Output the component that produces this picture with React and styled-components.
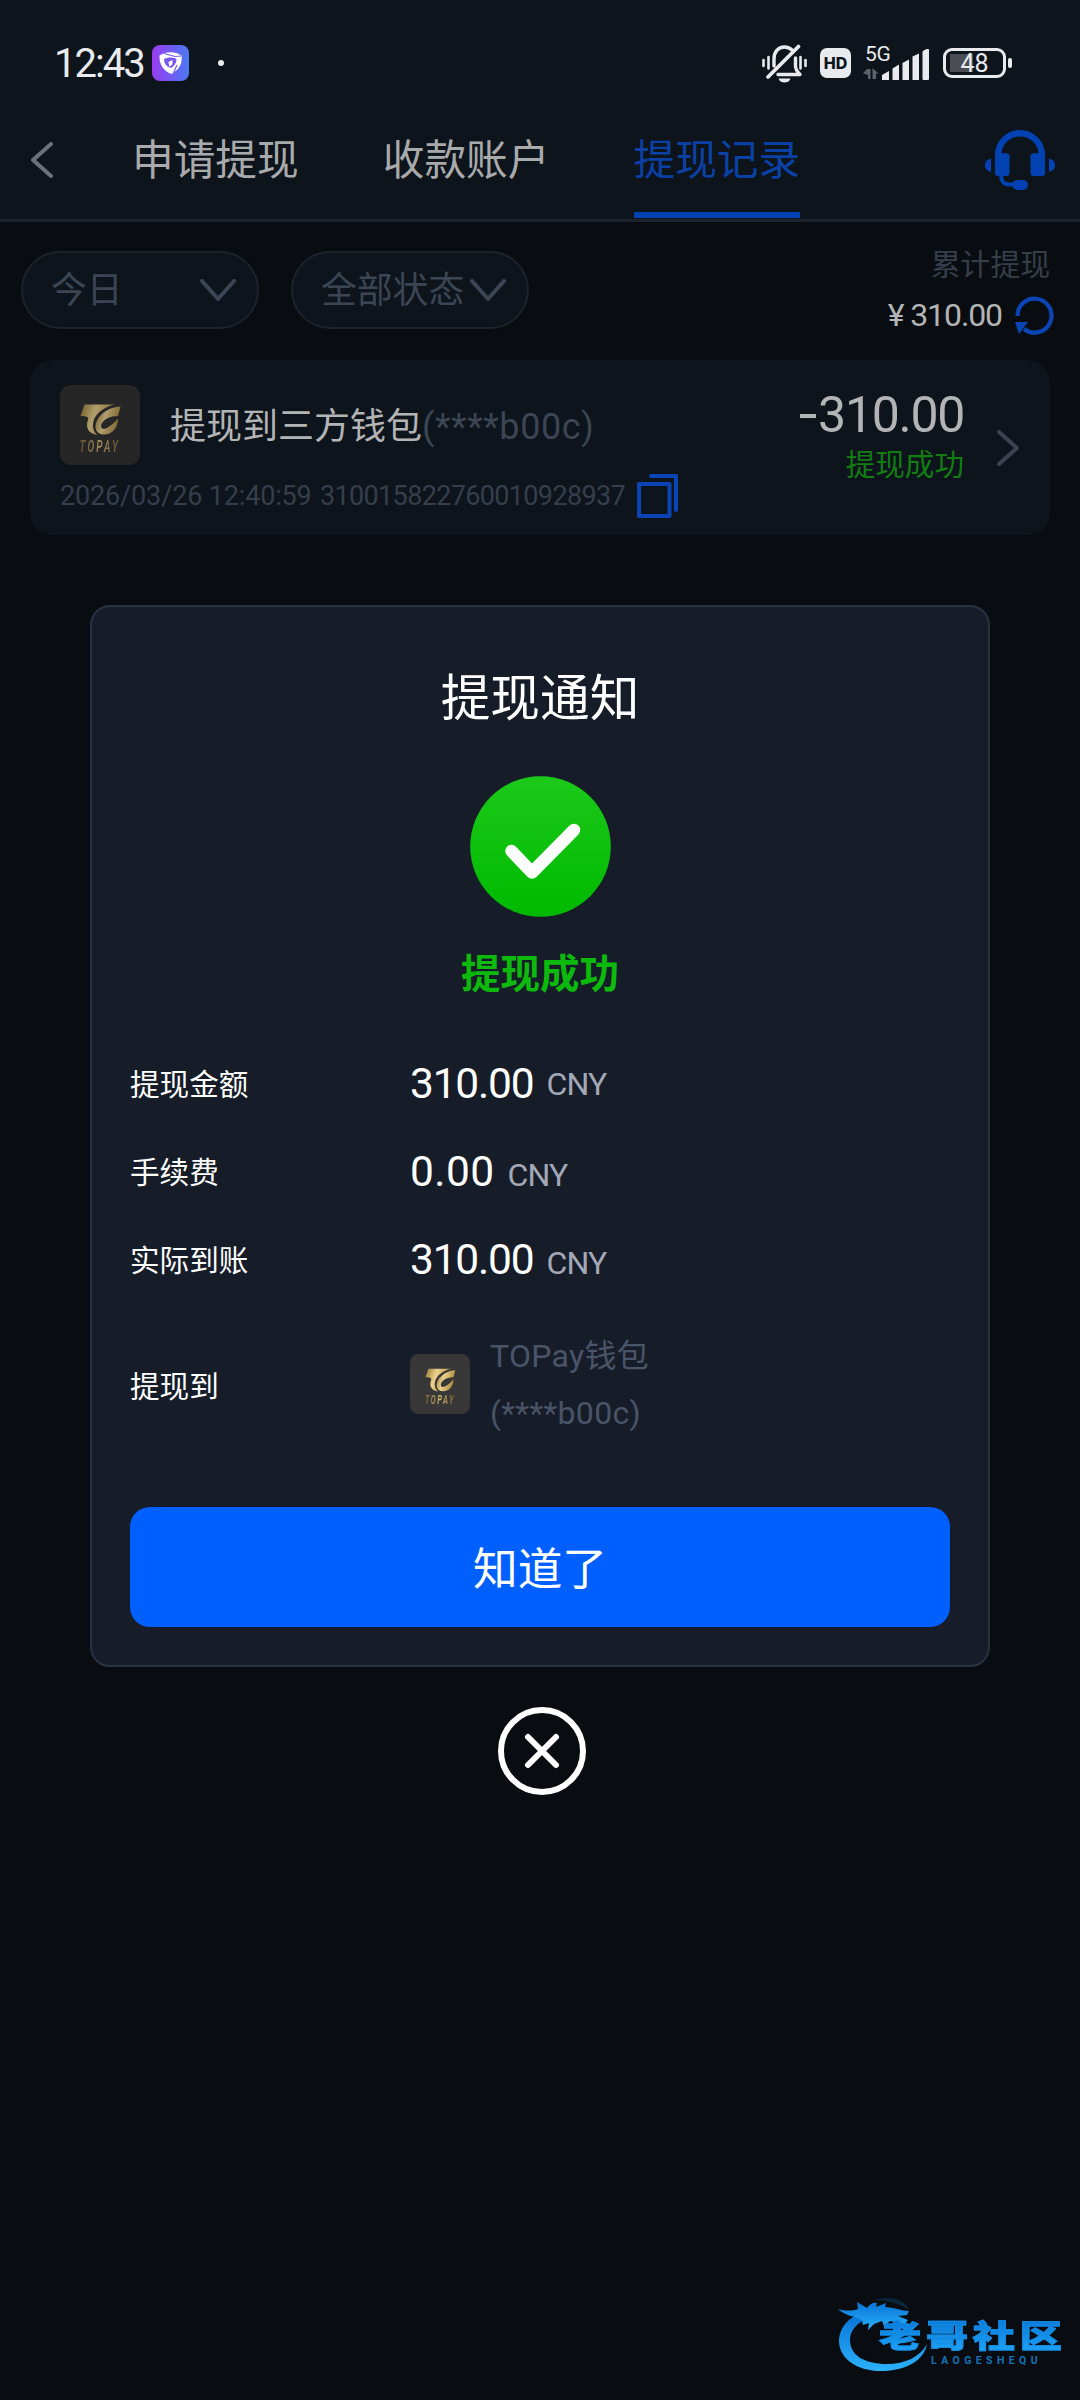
import styled, { createGlobalStyle, css } from "styled-components";

const GlobalStyle = createGlobalStyle`
    * {
        box-sizing: border-box;
    }
    body {
        margin: 0;
        background: #090c10;
        font-family: Roboto, "Noto Sans CJK SC", sans-serif;
    }
    button {
        border: none;
        padding: 0;
        background: none;
        font-family: inherit;
    }
    svg {
        display: block;
        flex-shrink: 0;
    }
`;

const Page = styled.div`
    position: relative;
    width: 1080px;
    height: 2400px;
    overflow: hidden;
    background: #090c10;
`;

/* status bar */
const StatusBar = styled.div`
    display: flex;
    align-items: center;
    height: 126px;
    padding: 0 68px 0 54px;
    background: #0d141b;
    color: #e8eaed;
`;
const Time = styled.span`
    width: 98px;
    padding-top: 1px;
    font-size: 40px;
    letter-spacing: -2px;
    line-height: 40px;
    white-space: nowrap;
`;
const Dot = styled.span`
    width: 6px;
    height: 6px;
    margin-left: 29px;
    border-radius: 50%;
    background: #e8eaed;
`;
const StatusIcons = styled.div`
    display: flex;
    align-items: center;
    margin-left: auto;
`;
const HdBadge = styled.span`
    width: 31px;
    height: 30px;
    margin: 0 12px 0 13px;
    border-radius: 7px;
    background: #e8eaed;
    color: #0d141b;
    font-family: Inter, sans-serif;
    font-size: 16px;
    font-weight: 800;
    line-height: 30px;
    text-align: center;
`;
const Signal = styled.div`
    position: relative;
    width: 68px;
    height: 34px;
    margin-right: 12px;
`;
const Network = styled.span`
    position: absolute;
    left: 2px;
    top: -1px;
    font-size: 21px;
    line-height: 18px;
    letter-spacing: -0.4px;
`;
const Battery = styled.div`
    position: relative;
    display: flex;
    align-items: center;
    justify-content: center;
    width: 63px;
    height: 30px;
    margin-right: 6px;
    border: 3px solid #e8eaed;
    border-radius: 9px;
    font-size: 25px;
    background: linear-gradient(#4a4e54, #4a4e54) 4px 3px / 23px 18px no-repeat;
    &::after {
        content: "";
        position: absolute;
        right: -9px;
        top: 7px;
        width: 4px;
        height: 10px;
        border-radius: 2px;
        background: #e8eaed;
    }
`;

/* tab bar */
const TabBar = styled.nav`
    display: flex;
    height: 96px;
    padding: 0 25px 0 31px;
    border-bottom: 3px solid #1c232d;
    background: #0d141b;
`;
const BarIcon = styled.div`
    display: flex;
    align-items: center;
    height: 68px;
`;
const Tabs = styled.div`
    display: flex;
    gap: 84px;
    margin: 0 auto 0 78px;
`;
const Tab = styled.button`
    height: 92px;
    padding: 2px 0 18px;
    border-bottom: 6px solid ${(props) => (props.$active ? "#0342b3" : "transparent")};
    color: ${(props) => (props.$active ? "#0b41a4" : "#a9aaac")};
    font-size: 41.7px;
    line-height: 66px;
`;

/* filters */
const FilterContainer = styled.div`
    display: flex;
    align-items: flex-start;
    gap: 32px;
    height: 138px;
    padding: 29px 26px 0 21px;
`;
const Select = styled.button`
    display: flex;
    align-items: center;
    justify-content: space-between;
    width: 238px;
    height: 78px;
    padding: 1px 20px 0 28px;
    border: 2px solid #1c232d;
    border-radius: 39px;
    background: #0d141b;
    color: #3c4553;
    font-size: 35.8px;
    line-height: 74px;
    white-space: nowrap;
`;
const Total = styled.div`
    margin-left: auto;
    text-align: right;
`;
const TotalLabel = styled.div`
    margin: -4px 4px 0 0;
    color: #363e4b;
    font-size: 29.8px;
    line-height: 36px;
`;
const TotalValue = styled.div`
    display: flex;
    align-items: center;
    justify-content: flex-end;
    gap: 13px;
    margin-top: 12px;
    color: #b3b4b5;
    font-size: 32px;
    letter-spacing: -1.1px;
    line-height: 40px;
`;

/* record card */
const Record = styled.section`
    display: flex;
    width: 1020px;
    height: 175px;
    margin: 0 0 0 30px;
    padding: 25px 29px 0 30px;
    border-radius: 22px;
    background: #0d141b;
`;
const RecordMain = styled.div`
    flex: 1;
`;
const RecordTitle = styled.div`
    display: flex;
    align-items: center;
    height: 80px;
    gap: 30px;
    color: #b3b4b5;
    font-size: 36px;
`;
const RecordName = styled.span`
    padding-bottom: 4px;
`;
const Masked = styled.span`
    color: #3c4553;
    letter-spacing: 0.6px;
`;
const RecordMeta = styled.div`
    display: flex;
    align-items: center;
    height: 62px;
    color: #363e4b;
    font-size: 27px;
    white-space: nowrap;
`;
const MetaDate = styled.span`
    width: 260px;
    letter-spacing: -0.15px;
`;
const MetaId = styled.span`
    width: 317px;
    letter-spacing: -0.65px;
`;
const RecordSide = styled.div`
    padding-top: 1px;
    margin-right: 33px;
    text-align: right;
`;
const Amount = styled.div`
    color: #b3b4b5;
    font-size: 50px;
    letter-spacing: -1.3px;
    line-height: 56px;
`;
const Minus = styled.span`
    font-family: Inter, sans-serif;
`;
const State = styled.div`
    color: #137c13;
    font-size: 29.6px;
    line-height: 44px;
`;
const RecordArrow = styled.div`
    padding-top: 45px;
`;

/* notice modal */
const Overlay = styled.div`
    position: absolute;
    inset: 605px 0 0 0;
    display: flex;
    flex-direction: column;
    align-items: center;
`;
const Modal = styled.div`
    display: flex;
    flex-direction: column;
    align-items: center;
    width: 900px;
    height: 1062px;
    padding: 0 38px;
    border: 2px solid #293243;
    border-radius: 20px;
    background: #161d28;
`;
const ModalTitle = styled.h2`
    margin: 56px 0 41px;
    color: #fff;
    font-size: 49.7px;
    font-weight: 400;
    line-height: 72px;
`;
const ModalState = styled.div`
    margin: 28px 0 33px;
    color: #0cb90c;
    font-size: 39.5px;
    font-weight: 700;
    line-height: 60px;
`;
const Row = styled.div`
    display: flex;
    align-items: center;
    width: 100%;
    height: ${(props) => props.$height || 88}px;
    color: #fff;
`;
const Label = styled.span`
    width: 280px;
    font-size: 29.6px;
`;
const Value = styled.span`
    display: flex;
    align-items: ${(props) => props.$align || "baseline"};
    gap: 13px;
    padding-top: 3px;
    font-size: 42.5px;
    letter-spacing: ${(props) => props.$spacing}px;
`;
const Currency = styled.small`
    color: #a3a8b6;
    font-size: 32px;
    letter-spacing: -0.8px;
`;
const Wallet = styled.span`
    margin-left: 20px;
    padding-top: 1px;
    color: #4a5468;
    font-size: 32px;
    letter-spacing: 0.3px;
    line-height: 57px;
`;
const ConfirmButton = styled.button`
    width: 820px;
    height: 120px;
    margin-top: 41px;
    padding-bottom: 3px;
    border-radius: 20px;
    background: #005fff;
    color: #fff;
    font-size: 44.7px;
`;
const CloseButton = styled.button`
    margin: 40px 0 0 4px;
`;

/* community mark in the corner */
const Watermark = styled.div`
    position: absolute;
    left: 838px;
    top: 2296px;
    display: flex;
`;
const blueText = css`
    background: linear-gradient(#0877d8, #22a8fa);
    background-clip: text;
    -webkit-background-clip: text;
    -webkit-text-stroke: 0.8px #148fe8;
    color: transparent;
`;
const MarkText = styled.div`
    margin: 22px 0 0 -51px;
`;
const MarkName = styled.div`
    ${blueText}
    width: 136px;
    font-size: 31px;
    font-weight: 900;
    letter-spacing: 3.5px;
    line-height: 38px;
    white-space: nowrap;
    transform: scaleX(1.36);
    transform-origin: 0 0;
`;
const MarkLatin = styled.div`
    margin: -1px 0 0 52px;
    color: #1673b8;
    font-size: 10.5px;
    font-weight: 700;
    letter-spacing: 4.4px;
    line-height: 12px;
`;

const Chevron = ({ points, width, height, color, stroke = 4 }) => (
    <svg width={width} height={height} fill="none" stroke={color} strokeWidth={stroke} strokeLinecap="round" strokeLinejoin="round">
        <polyline points={points} />
    </svg>
);

const AppBadge = () => (
    <svg width="37" height="36" viewBox="0 0 37 36">
        <defs>
            <linearGradient id="badge" x1="0" x2="1">
                <stop offset="0" stopColor="#9a3cf0" />
                <stop offset="1" stopColor="#4a78f2" />
            </linearGradient>
        </defs>
        <rect width="37" height="36" rx="8" fill="url(#badge)" />
        <path d="M7.500 10.500c6-4.500 16-4.500 22 0c1 8-2 14-10 18.500C11 26 7 19 7.500 10.500z" fill="#fff" />
        <path d="M12 14c4-2 9-2 12.500 0c0 4-2 7-5.500 9c-4-1-7-4-7-9z" fill="#7a58ee" />
        <path d="M16.500 17l4-2v4l-3 3z" fill="#fff" />
        <path d="M12 8.500l11 3l6-.5M25 20l-3.500 8" stroke="#7a58ee" strokeWidth="1.200" fill="none" />
    </svg>
);

const MutedBell = () => (
    <svg width="45" height="40" viewBox="0 0 45 40" fill="none" stroke="#e8eaed" strokeWidth="3.400" strokeLinecap="round">
        <path d="M12 23v-7c0-7 4-12 10.500-12c3 0 5.500 1 7.500 3M16 31.500h22c-3-3-4.500-5-4.500-8.500v-8" strokeLinejoin="round" />
        <path d="M6 34L36.500 3.500" strokeWidth="3.800" />
        <path d="M1.500 17v6M6.500 14v11.500M38.500 14v11.500M43.500 17v6" strokeWidth="2.600" />
        <path d="M16.500 35.500h12c-1 3-3.500 4-6 4s-5-1-6-4z" fill="#e8eaed" stroke="none" />
    </svg>
);

const SignalBars = () => (
    <svg width="68" height="34" viewBox="0 0 68 34" fill="#e8eaed">
        <g fill="#5d6268">
            <path d="M4 23h3.500v10H5v-4L0 27.500zM9.500 33V22l6 5.500H13V33z" />
        </g>
        <path d="M19 34v-5l7-4v9zM29.500 34V22.500l6.500-4V34zM39.500 34V17l6.500-3.500V34zM49.500 34V10.500L56 7.500V34z" />
        <path d="M59.500 33V6c0-1.500 6.500-4.500 6.500-2v29q0 1-1 1h-4.500q-1 0-1-1z" />
    </svg>
);

const Headset = () => (
    <svg width="70" height="60" viewBox="0 0 70 60" fill="#0342b3">
        <path d="M13.200 30v-5a21.800 21.800 0 0 1 43.600 0v5" fill="none" stroke="#0342b3" strokeWidth="6.400" />
        <rect x="10" y="23.300" width="14.500" height="22.700" rx="3" />
        <rect x="45.500" y="23.300" width="14.500" height="22.700" rx="3" />
        <path d="M6 28.500v13.500q-6-1.500-6-6.800t6-6.700zM64 28.500v13.500q6-1.500 6-6.800t-6-6.700z" />
        <path d="M16 45c0 6 3 9.500 8 9.500h6" fill="none" stroke="#0342b3" strokeWidth="4" />
        <rect x="27.500" y="50" width="15.500" height="10" rx="5" />
    </svg>
);

const Refresh = () => (
    <svg width="39" height="39" viewBox="0 0 39 39">
        <path d="M2.500 20A17 17 0 1 1 9 33" fill="none" stroke="#0b45b5" strokeWidth="4.200" />
        <path d="M0 26h13L4 38z" fill="#0b45b5" />
    </svg>
);

const Copy = () => (
    <svg width="42" height="44" viewBox="0 0 42 44" fill="none" stroke="#0b45b5" strokeWidth="4" strokeLinecap="round" strokeLinejoin="round">
        <rect x="2" y="10" width="30.500" height="32" />
        <path d="M14 2h25v34" />
    </svg>
);

const WalletLogo = ({ size, background, opacity }) => (
    <svg width={size} height={size} viewBox="0 0 80 80">
        <defs>
            <linearGradient id="gold" x1="0" x2="1" y1="0" y2="0.300">
                <stop offset="0" stopColor="#94732f" />
                <stop offset="0.450" stopColor="#ecd28c" />
                <stop offset="1" stopColor="#a98338" />
            </linearGradient>
            <linearGradient id="goldText">
                <stop offset="0" stopColor="#7d6130" />
                <stop offset="0.500" stopColor="#dcc07a" />
                <stop offset="1" stopColor="#7d6130" />
            </linearGradient>
        </defs>
        <rect width="80" height="80" rx="11" fill={background} />
        <g fill="url(#gold)" opacity={opacity}>
            <path d="M24.500 19.500H55C44 22 36 28 33.500 36c-1.500 6 0 10.500 4 14c-9-1-12.500-8-9.500-15c1-3-1-4-7.500-4z" />
            <path d="M60.500 21.500L58 31c-8 0-14 3-16.500 8c-1.500 4.500 1.500 6 5.500 4c4-2.500 8-5.500 11-9.500c0 10-6 16-14 16s-10.500-7-7-14c4-8 13-13.500 23.500-14z" />
            <text transform="translate(19.500 66.500) scale(0.620 1)" letterSpacing="3.600" fontFamily="Roboto" fontSize="16" fontStyle="italic" fontWeight="500" fill="url(#goldText)">TOPAY</text>
        </g>
    </svg>
);

const SuccessIcon = () => (
    <svg width="141" height="141" viewBox="0 0 141 141">
        <defs>
            <linearGradient id="success" x1="0" x2="0" y1="0" y2="1">
                <stop offset="0" stopColor="#1cc91a" />
                <stop offset="1" stopColor="#00b900" />
            </linearGradient>
        </defs>
        <circle cx="70.500" cy="70.500" r="70.300" fill="url(#success)" />
        <polyline points="41.500,75 62,96.500 104,54" fill="none" stroke="#fff" strokeWidth="12.500" strokeLinecap="round" strokeLinejoin="round" />
    </svg>
);

const CloseIcon = () => (
    <svg width="88" height="88" viewBox="0 0 88 88" fill="none" stroke="#fff" strokeWidth="6" strokeLinecap="round">
        <circle cx="44" cy="44" r="41" />
        <path d="M30 30l28 28M58 30l-28 28" />
    </svg>
);

const Dragon = () => (
    <svg width="92" height="78" viewBox="0 0 92 78">
        <defs>
            <linearGradient id="dragon" x1="0" x2="0" y1="0" y2="1">
                <stop offset="0.100" stopColor="#0b78da" />
                <stop offset="1" stopColor="#2cb2fa" />
            </linearGradient>
        </defs>
        <g fill="url(#dragon)">
            <path d="M24 17C8 22 1 34 1 46c1 18 20 30 45 29c22-1 40-10 43-27c-7 13-22 20-40 20C26 68 12 59 12 44c0-9 6-18 21-22z" />
            <path d="M0 13c7 2 14 2 20 0l-1-7l10 6c3-4 6-6 10-5l-1 4l10-4l-1 4c8 0 17 4 24 4l-2 4l-9 1l10 4l-3 4l-15-3l-6 5l-2-5l-8 3l-6 6l1-7l-6 2l-1-5C17 20 7 20 0 13z" />
            <path d="M36 4c12-5 33-2 35 11c-5-7-20-10-35-11z" opacity="0.200" />
        </g>
    </svg>
);

const tabs = ["申请提现", "收款账户", "提现记录"];

const rows = [
    { label: "提现金额", value: "310.00", spacing: -1.2, align: "center" },
    { label: "手续费", value: "0.00", spacing: 0.4 },
    { label: "实际到账", value: "310.00", spacing: -1.2 },
];

const App = () => {
    return (
        <>
            <GlobalStyle />
            <Page>
                <StatusBar>
                    <Time>12:43</Time>
                    <AppBadge />
                    <Dot />
                    <StatusIcons>
                        <MutedBell />
                        <HdBadge>HD</HdBadge>
                        <Signal>
                            <SignalBars />
                            <Network>5G</Network>
                        </Signal>
                        <Battery>48</Battery>
                    </StatusIcons>
                </StatusBar>
                <TabBar>
                    <BarIcon>
                        <Chevron points="20,2 2,18 20,34" width={23} height={37} color="#6b7178" />
                    </BarIcon>
                    <Tabs>
                        {tabs.map((tab) => (
                            <Tab key={tab} $active={tab === "提现记录"}>{tab}</Tab>
                        ))}
                    </Tabs>
                    <BarIcon>
                        <Headset />
                    </BarIcon>
                </TabBar>
                <FilterContainer>
                    <Select>
                        今日
                        <Chevron points="2,2 18,20 34,2" width={37} height={24} color="#3c4553" />
                    </Select>
                    <Select>
                        全部状态
                        <Chevron points="2,2 18,20 34,2" width={37} height={24} color="#3c4553" />
                    </Select>
                    <Total>
                        <TotalLabel>累计提现</TotalLabel>
                        <TotalValue>
                            ¥ 310.00
                            <Refresh />
                        </TotalValue>
                    </Total>
                </FilterContainer>
                <Record>
                    <RecordMain>
                        <RecordTitle>
                            <WalletLogo size={80} background="#262626" opacity={0.7} />
                            <RecordName>提现到三方钱包<Masked>(****b00c)</Masked></RecordName>
                        </RecordTitle>
                        <RecordMeta>
                            <MetaDate>2026/03/26 12:40:59</MetaDate>
                            <MetaId>310015822760010928937</MetaId>
                            <Copy />
                        </RecordMeta>
                    </RecordMain>
                    <RecordSide>
                        <Amount><Minus>-</Minus>310.00</Amount>
                        <State>提现成功</State>
                    </RecordSide>
                    <RecordArrow>
                        <Chevron points="2,2 20,18 2,34" width={24} height={37} color="#3c4350" />
                    </RecordArrow>
                </Record>
                <Overlay>
                    <Modal>
                        <ModalTitle>提现通知</ModalTitle>
                        <SuccessIcon />
                        <ModalState>提现成功</ModalState>
                        {rows.map((row) => (
                            <Row key={row.label}>
                                <Label>{row.label}</Label>
                                <Value $align={row.align} $spacing={row.spacing}>
                                    {row.value}
                                    <Currency>CNY</Currency>
                                </Value>
                            </Row>
                        ))}
                        <Row $height={164}>
                            <Label>提现到</Label>
                            <WalletLogo size={60} background="#373737" opacity={1} />
                            <Wallet>TOPay钱包<br />(****b00c)</Wallet>
                        </Row>
                        <ConfirmButton>知道了</ConfirmButton>
                    </Modal>
                    <CloseButton>
                        <CloseIcon />
                    </CloseButton>
                </Overlay>
                <Watermark>
                    <Dragon />
                    <MarkText>
                        <MarkName>老哥社区</MarkName>
                        <MarkLatin>LAOGESHEQU</MarkLatin>
                    </MarkText>
                </Watermark>
            </Page>
        </>
    );
};

export default App;
